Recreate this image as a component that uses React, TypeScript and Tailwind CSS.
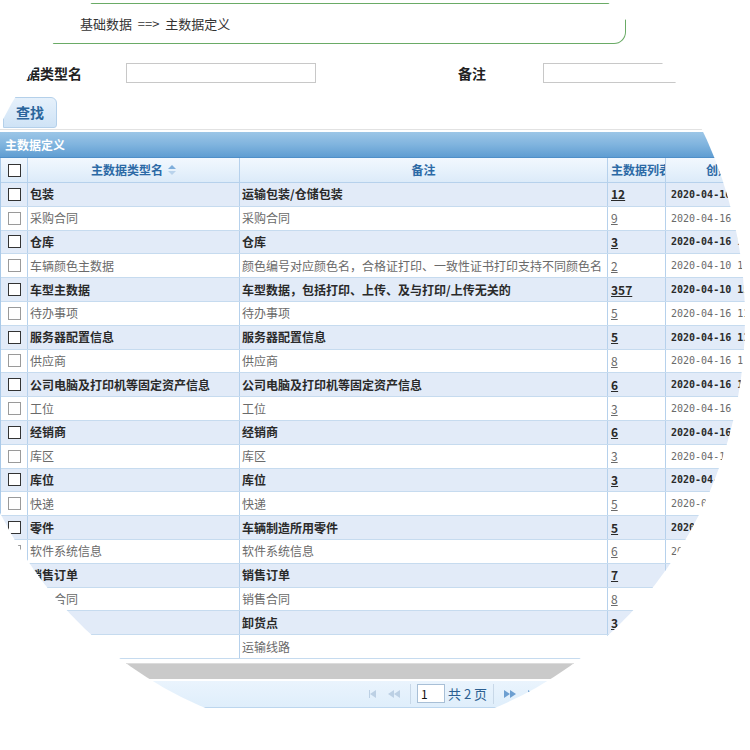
import React from 'react'

const rows: [string, string, string, string][] = [
  ['包装', '运输包装/仓储包装', '12', '2020-04-16 10:21:33'],
  ['采购合同', '采购合同', '9', '2020-04-16 10:22:08'],
  ['仓库', '仓库', '3', '2020-04-16 10:22:41'],
  ['车辆颜色主数据', '颜色编号对应颜色名，合格证打印、一致性证书打印支持不同颜色名', '2', '2020-04-10 15:02:17'],
  ['车型主数据', '车型数据，包括打印、上传、及与打印/上传无关的', '357', '2020-04-10 15:03:50'],
  ['待办事项', '待办事项', '5', '2020-04-16 11:05:12'],
  ['服务器配置信息', '服务器配置信息', '5', '2020-04-16 11:06:44'],
  ['供应商', '供应商', '8', '2020-04-16 11:07:20'],
  ['公司电脑及打印机等固定资产信息', '公司电脑及打印机等固定资产信息', '6', '2020-04-16 11:08:02'],
  ['工位', '工位', '3', '2020-04-16 11:09:36'],
  ['经销商', '经销商', '6', '2020-04-16 11:10:15'],
  ['库区', '库区', '3', '2020-04-16 11:11:27'],
  ['库位', '库位', '3', '2020-04-16 11:12:03'],
  ['快递', '快递', '5', '2020-04-16 11:13:48'],
  ['零件', '车辆制造所用零件', '5', '2020-04-16 11:14:30'],
  ['软件系统信息', '软件系统信息', '6', '2020-04-16 11:15:09'],
  ['销售订单', '销售订单', '7', '2020-04-16 11:16:51'],
  ['销售合同', '销售合同', '8', '2020-04-16 11:17:22'],
  ['卸货点', '卸货点', '3', '2020-04-16 11:18:40'],
  ['运输线路', '运输线路', '2', '2020-04-16 11:19:13'],
]

const Check = ({ dark }: { dark: boolean }) => (
  <span
    className={
      'block w-[13px] h-[13px] bg-white border ' +
      (dark ? 'border-[#333]' : 'border-[#9a9a9a]')
    }
  />
)

const Tri = ({ dir, color }: { dir: 'l' | 'r'; color: string }) => (
  <svg width="6" height="8" viewBox="0 0 6 8">
    {dir === 'l' ? (
      <path d="M6 0 L0 4 L6 8 Z" fill={color} />
    ) : (
      <path d="M0 0 L6 4 L0 8 Z" fill={color} />
    )}
  </svg>
)

const App = () => {
  return (
    <div className="w-[750px] h-[750px] bg-white overflow-hidden font-['Noto_Sans_CJK_SC',sans-serif] text-[12px]">
      <div className="w-[750px] h-[750px] [clip-path:ellipse(395px_418px_at_350px_316px)]">
        {/* breadcrumb */}
        <div className="mt-[3px] ml-[20px] w-[606px] h-[41px] border-t border-b border-r border-[#6aab66] rounded-br-[12px] flex items-center pl-[60px] text-[13px] text-[#333] whitespace-pre">
          基础数据  ==&gt;  主数据定义
        </div>

        {/* search */}
        <div className="mt-[19px] flex items-center h-[20px]">
          <div className="ml-[-2px] w-[84px] text-right font-bold text-[14px] text-[#222] whitespace-nowrap">
            主数据类型名
          </div>
          <div className="ml-[44px] w-[190px] h-[20px] border border-[#c8c8c8]" />
          <div className="ml-[142px] font-bold text-[14px] text-[#222]">备注</div>
          <div className="ml-[57px] w-[200px] h-[20px] border border-[#c8c8c8]" />
        </div>

        <div className="mt-[14px] ml-[3px] w-[54px] h-[31px] rounded-tr-[6px] rounded-tl-[6px] rounded-br-[3px] border border-[#b4d0ea] bg-gradient-to-b from-[#e6f1fb] to-[#cfe3f6] flex items-center pl-[12px] font-bold text-[14px] text-[#2a659b]">
          查找
        </div>

        {/* grid panel */}
        <div className="mt-[1px] border-t border-[#e2e2e2] pt-[2px] w-[820px]">
          <div className="h-[26px] bg-gradient-to-b from-[#9cc6e7] via-[#80b4de] to-[#5f9dd2] flex items-center pl-[5px] text-white font-bold text-[12px] border-b border-[#4f8fc8]">
            主数据定义
          </div>

          <div className="border-l border-[#a9c9e8] w-[820px]">
            {/* header */}
            <div className="flex h-[25px] bg-gradient-to-b from-[#f2f8fe] to-[#dcebf9] border-b border-[#b6d1ec] text-[#2c6aa6] font-bold">
              <div className="w-[27px] flex items-center justify-center border-r border-[#b6d1ec]">
                <Check dark />
              </div>
              <div className="w-[212px] flex items-center justify-center gap-[5px] border-r border-[#b6d1ec]">
                主数据类型名
                <svg width="8" height="10" viewBox="0 0 8 10">
                  <path d="M4 0 L8 4 L0 4 Z" fill="#7eaedb" />
                  <path d="M0 6 L8 6 L4 10 Z" fill="#b9d3ec" />
                </svg>
              </div>
              <div className="w-[368px] flex items-center justify-center border-r border-[#b6d1ec]">
                备注
              </div>
              <div className="w-[58px] flex items-center pl-[3px] overflow-hidden whitespace-nowrap border-r border-[#b6d1ec]">
                主数据列表
              </div>
              <div className="w-[150px] flex items-center pl-[40px]">创建时间</div>
            </div>

            {rows.map((r, i) => {
              const odd = i % 2 === 0
              return (
                <div
                  key={i}
                  className={
                    'flex h-[23.8px] border-b border-[#c6dbef] ' +
                    (odd ? 'bg-[#e2ebf8] font-bold text-[#2a2a2a]' : 'bg-white text-[#6a6a6a]')
                  }
                >
                  <div className="w-[27px] flex items-center justify-center border-r border-[#b6d1ec]">
                    <Check dark={odd} />
                  </div>
                  <div className="w-[212px] flex items-center pl-[2px] whitespace-nowrap border-r border-[#b6d1ec]">
                    {r[0]}
                  </div>
                  <div className="w-[368px] flex items-center pl-[2px] whitespace-nowrap overflow-hidden border-r border-[#b6d1ec]">
                    {r[1]}
                  </div>
                  <div className="w-[58px] flex items-center pl-[3px] underline border-r border-[#b6d1ec]">
                    {r[2]}
                  </div>
                  <div className="w-[150px] flex items-center pl-[5px] whitespace-nowrap font-['DejaVu_Sans_Mono',monospace] text-[10px]">
                    {r[3]}
                  </div>
                </div>
              )
            })}

            {/* scrollbar */}
            <div className="mt-[4px] h-[16px] bg-[#cacaca] border-t border-[#dcdcdc]" />

            {/* pager */}
            <div className="mt-[2px] h-[27px] bg-gradient-to-b from-[#eaf4fd] to-[#dfeefb] border-b border-[#bcd6ee] flex items-center pl-[368px] gap-[6px] text-[13px] text-[#2b5f91]">
              <span className="flex items-center">
                <span className="w-[1px] h-[8px] bg-[#bcd0e4]" />
                <Tri dir="l" color="#bcd0e4" />
              </span>
              <span className="flex items-center ml-[6px]">
                <Tri dir="l" color="#bcd0e4" />
                <Tri dir="l" color="#bcd0e4" />
              </span>
              <span className="w-[1px] h-[20px] bg-[#c8d8e8] ml-[4px]" />
              <span className="w-[28px] h-[19px] bg-white border border-[#a8bfd6] flex items-center pl-[3px] text-[12px] text-[#111]">
                1
              </span>
              <span className="ml-[-3px] whitespace-nowrap">共 2 页</span>
              <span className="w-[1px] h-[20px] bg-[#c8d8e8]" />
              <span className="flex items-center ml-[4px]">
                <Tri dir="r" color="#6d9fd1" />
                <Tri dir="r" color="#6d9fd1" />
              </span>
              <span className="flex items-center ml-[6px]">
                <Tri dir="r" color="#6d9fd1" />
                <span className="w-[1px] h-[8px] bg-[#6d9fd1]" />
              </span>
            </div>
          </div>
        </div>
      </div>
    </div>
  )
}

export default App
